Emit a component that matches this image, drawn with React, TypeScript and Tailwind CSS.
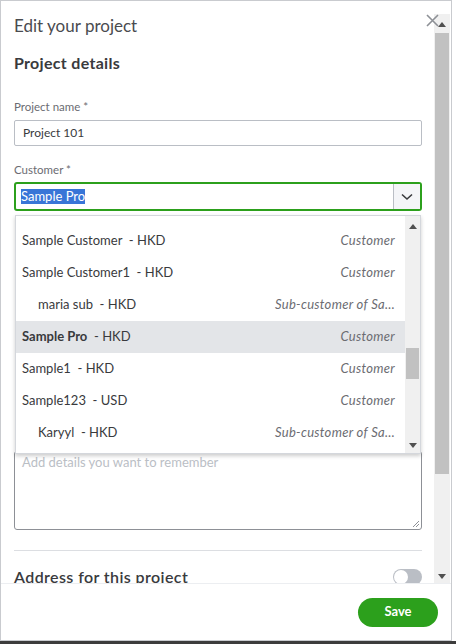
import React from "react";

const rows = [
  { name: "Sample Customer", cur: "HKD", type: "Customer" },
  { name: "Sample Customer1", cur: "HKD", type: "Customer" },
  { name: "maria sub", cur: "HKD", type: "Sub-customer of Sa…", sub: true },
  { name: "Sample Pro", cur: "HKD", type: "Customer", active: true },
  { name: "Sample1", cur: "HKD", type: "Customer" },
  { name: "Sample123", cur: "USD", type: "Customer" },
  { name: "Karyyl", cur: "HKD", type: "Sub-customer of Sa…", sub: true },
];

function Tri({ up }: { up?: boolean }) {
  return (
    <svg width="8" height="5" viewBox="0 0 8 5">
      <path d={up ? "M0 5 L4 0 L8 5 Z" : "M0 0 L4 5 L8 0 Z"} fill="#505050" />
    </svg>
  );
}

export default function App() {
  return (
    <div
      className="w-[456px] h-[644px] bg-white overflow-hidden"
      style={{ fontFamily: "Lato, 'Noto Sans', sans-serif" }}
    >
      <div className="relative w-[452px] h-[641px] border border-[#c9cbcf] flex flex-col bg-white">
        <div className="flex flex-1 min-h-0">
          <div className="flex-1 overflow-hidden pl-[13px] pr-[12px] text-[#393a3d]">
            <h1 className="text-[17px] leading-[20px] mt-[15px] text-[#4a4b4f]">Edit your project</h1>
            <h2 className="text-[16px] font-bold leading-[20px] mt-[17px] tracking-[0.3px]">Project details</h2>

            <label className="block text-[11.5px] text-[#6b6c72] mt-[27px] leading-[14px]">Project name *</label>
            <div className="mt-[6px] h-[26px] border border-[#babec5] rounded-[2px] flex items-center px-[8px] text-[12px]">
              Project 101
            </div>

            <label className="block text-[11.5px] text-[#6b6c72] mt-[17px] leading-[14px]">Customer *</label>
            <div className="relative mt-[5px]">
              <div className="h-[29px] border-2 border-[#2ca01c] rounded-[3px] flex items-stretch">
                <div className="flex-1 flex items-center pl-[5px]">
                  <span className="bg-[#3875d7] text-white text-[13px] leading-[15px]">Sample Pro</span>
                </div>
                <div className="w-[27px] border-l border-[#babec5] bg-[#f4f5f8] flex items-center justify-center">
                  <svg width="12" height="8" viewBox="0 0 12 8">
                    <path d="M1 1.5 L6 6 L11 1.5" stroke="#393a3d" strokeWidth="1.6" fill="none" />
                  </svg>
                </div>
              </div>

              <div className="absolute z-10 left-[1px] right-[1px] top-[33px] h-[239px] bg-white border border-[#d4d7dc] shadow-[0_2px_4px_rgba(0,0,0,0.2)] flex overflow-hidden">
                <div className="flex-1 pt-[9px] min-w-0">
                  {rows.map((r) => (
                    <div
                      key={r.name}
                      className={`h-[32px] flex items-center justify-between pr-[10px] text-[13px] ${
                        r.sub ? "pl-[22px]" : "pl-[6px]"
                      } ${r.active ? "bg-[#e3e5e8]" : ""}`}
                    >
                      <span className="whitespace-pre">
                        <span className={r.active ? "font-bold" : ""}>{r.name}</span>
                        {"  - " + r.cur}
                      </span>
                      <span className="italic text-[#6b6c72] tracking-[0.3px]">{r.type}</span>
                    </div>
                  ))}
                </div>
                <div className="w-[15px] bg-[#f0f0f0] flex flex-col items-center">
                  <div className="mt-[8px]">
                    <Tri up />
                  </div>
                  <div className="mt-[119px] w-[13px] h-[31px] bg-[#c1c1c1]" />
                  <div className="mt-auto mb-[5px]">
                    <Tri />
                  </div>
                </div>
              </div>
            </div>

            <div className="mt-[240px] h-[79px] border border-[#8d9096] rounded-[3px] relative px-[7px] pt-[1px] text-[13px] text-[#babec5]">
              Add details you want to remember
              <svg className="absolute right-[1px] bottom-[1px]" width="9" height="9" viewBox="0 0 9 9">
                <path d="M8 2 L2 8 M8 5 L5 8" stroke="#8d9096" strokeWidth="1" />
              </svg>
            </div>

            <div className="mt-[20px] border-t border-[#dcdee2]" />

            <div className="mt-[17px] flex items-center justify-between">
              <span className="text-[16px] font-semibold leading-[18px] tracking-[0.4px]">Address for this project</span>
              <div className="w-[29px] h-[16px] rounded-full bg-[#babec5] relative">
                <div className="absolute left-[1px] top-[1px] w-[14px] h-[14px] rounded-full bg-white" />
              </div>
            </div>
          </div>

          <div className="w-[16px] mr-[1px] mt-[13px] bg-[#f0f0f0] flex flex-col items-center">
            <div className="mt-[8px]">
              <Tri up />
            </div>
            <div className="mt-[6px] w-[14px] h-[441px] bg-[#c1c1c1]" />
            <div className="mt-auto mb-[4px]">
              <Tri />
            </div>
          </div>
        </div>

        <div className="h-[57px] border-t border-[#eceef1] flex items-center justify-end pr-[13px] shrink-0">
          <button className="h-[29px] w-[80px] rounded-full bg-[#2ca01c] text-white text-[13px] font-bold">
            Save
          </button>
        </div>

        <button className="absolute right-[12px] top-[12px] w-[14px] h-[14px] flex items-center justify-center">
          <svg width="13" height="13" viewBox="0 0 13 13">
            <path d="M1 1 L12 12 M12 1 L1 12" stroke="#8d9096" strokeWidth="1.6" />
          </svg>
        </button>
      </div>
      <div className="h-[3px] bg-[#3c3c3c]" />
    </div>
  );
}
